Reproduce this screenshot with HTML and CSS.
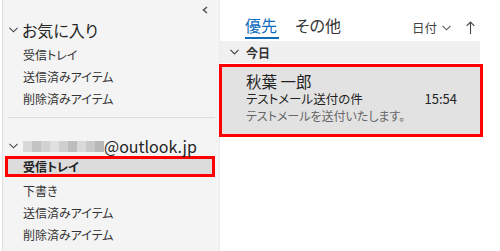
FILE: index.html
```html
<!DOCTYPE html>
<html lang="ja">
<head>
    <meta charset="UTF-8" />
    <title>受信トレイ</title>
    <link rel="stylesheet" href="styles.css">
</head>
<body>
    <div class="folders">
        <div class="collapse-row">
            <svg width="6" height="8" viewBox="0 0 6 8"><path d="M5 1 L1.5 4 L5 7" fill="none" stroke="#555" stroke-width="1.6"/></svg>
        </div>

        <div class="group-head">
            <svg class="chev" width="9" height="6" viewBox="0 0 9 6"><path d="M0.5 0.8 L4.5 4.8 L8.5 0.8" fill="none" stroke="#444" stroke-width="1.1"/></svg>
            <span>お気に入り</span>
        </div>
        <div class="folder">受信トレイ</div>
        <div class="folder">送信済みアイテム</div>
        <div class="folder">削除済みアイテム</div>

        <div class="divider"></div>

        <div class="group-head account">
            <svg class="chev" width="9" height="6" viewBox="0 0 9 6"><path d="M0.5 0.8 L4.5 4.8 L8.5 0.8" fill="none" stroke="#444" stroke-width="1.1"/></svg>
            <span class="mosaic"></span><span>@outlook.jp</span>
        </div>
        <div class="folder selected">受信トレイ</div>
        <div class="folder">下書き</div>
        <div class="folder">送信済みアイテム</div>
        <div class="folder">削除済みアイテム</div>
    </div>

    <div class="messages">
        <div class="tabs">
            <div class="tab active">優先</div>
            <div class="tab">その他</div>
            <div class="sort">
                <span>日付</span>
                <svg width="9" height="6" viewBox="0 0 9 6"><path d="M0.5 0.8 L4.5 4.8 L8.5 0.8" fill="none" stroke="#555" stroke-width="1.1"/></svg>
                <svg class="arrow" width="9" height="13" viewBox="0 0 9 13"><path d="M4.5 13 V1 M0.7 4.8 L4.5 1 L8.3 4.8" fill="none" stroke="#444" stroke-width="1.1"/></svg>
            </div>
        </div>

        <div class="day-bar">
            <svg width="9" height="6" viewBox="0 0 9 6"><path d="M0.5 0.8 L4.5 4.8 L8.5 0.8" fill="none" stroke="#444" stroke-width="1.2"/></svg>
            <span>今日</span>
        </div>

        <div class="mail selected">
            <div class="from">秋葉 一郎</div>
            <div class="subject-row">
                <span>テストメール送付の件</span>
                <span class="time">15:54</span>
            </div>
            <div class="preview">テストメールを送付いたします。</div>
        </div>
    </div>
</body>
</html>
```

FILE: styles.css
```css
body {
    margin: 0;
    padding-left: 2px;
    display: flex;
    height: 251px;
    overflow: hidden;
    background: #fff;
    color: #262626;
    font-family: 'Noto Sans CJK JP', 'Noto Sans', sans-serif;
    font-feature-settings: "palt";
}
.folders {
    width: 216px;
    border-left: 1px solid #dedede;
    background: #f4f4f4;
}
.collapse-row {
    height: 20px;
    display: flex;
    justify-content: flex-end;
    align-items: center;
    padding-right: 11px;
}
.group-head {
    height: 20px;
    display: flex;
    align-items: center;
    padding-left: 6px;
    font-size: 16px;
    margin-bottom: 4px;
}
.group-head .chev {
    margin-right: 4px;
}
.folder {
    height: 22px;
    line-height: 22px;
    padding-left: 20px;
    font-size: 12px;
    color: #333;
}
.divider {
    height: 1px;
    background: #dcdcdc;
    margin: 7px 4px 18px 5px;
}
.account {
    margin-bottom: 0;
}
.mosaic {
    display: inline-block;
    width: 81px;
    height: 11px;
    margin-left: 1px;
    background: linear-gradient(90deg, #d8d8d8 0 9px, #c4c4c4 9px 18px, #d2d2d2 18px 27px, #e0e0e0 27px 36px, #cfcfcf 36px 45px, #bdbdbd 45px 54px, #d9d9d9 54px 63px, #c8c8c8 63px 72px, #b8b8b8 72px 81px);
}
.folder.selected {
    height: 15px;
    line-height: 15px;
    margin: 0 4px 3px 2px;
    padding-left: 15px;
    border: 3px solid #f00;
    background: #dcdcdc;
    font-weight: bold;
    color: #222;
}
.messages {
    flex: 1;
    border-left: 1px solid #ececec;
}
.tabs {
    height: 41px;
    display: flex;
    align-items: flex-start;
    padding-left: 25px;
    padding-right: 25px;
}
.tab {
    margin-top: 15px;
    height: 22px;
    line-height: 20px;
    font-size: 16px;
    color: #333;
    margin-right: 16px;
}
.tab.active {
    color: #0f6cbd;
    border-bottom: 2px solid #0f6cbd;
    padding-right: 2px;
}
.sort {
    margin-left: auto;
    margin-top: 18px;
    display: flex;
    align-items: center;
    font-size: 12.5px;
    color: #444;
}
.sort svg {
    margin-left: 5px;
}
.sort .arrow {
    margin-left: 15px;
}
.day-bar {
    height: 22px;
    margin-right: 20px;
    display: flex;
    align-items: center;
    padding-left: 10px;
    background: #f0f0f0;
    font-size: 12px;
    font-weight: bold;
    color: #333;
}
.day-bar span {
    margin-left: 7px;
}
.mail {
    margin: 1px 17px 0 -1px;
    height: 67px;
    padding-left: 24px;
    padding-right: 23px;
    border: 3px solid #f00;
    background: #e2e2e2;
}
.from {
    margin-top: 5px;
    font-size: 15.5px;
    line-height: 19px;
    color: #222;
}
.subject-row {
    display: flex;
    justify-content: space-between;
    font-size: 12.5px;
    line-height: 16px;
    color: #222;
}
.time {
    font-size: 13px;
}
.preview {
    font-size: 12px;
    line-height: 18px;
    color: #666;
}
```
